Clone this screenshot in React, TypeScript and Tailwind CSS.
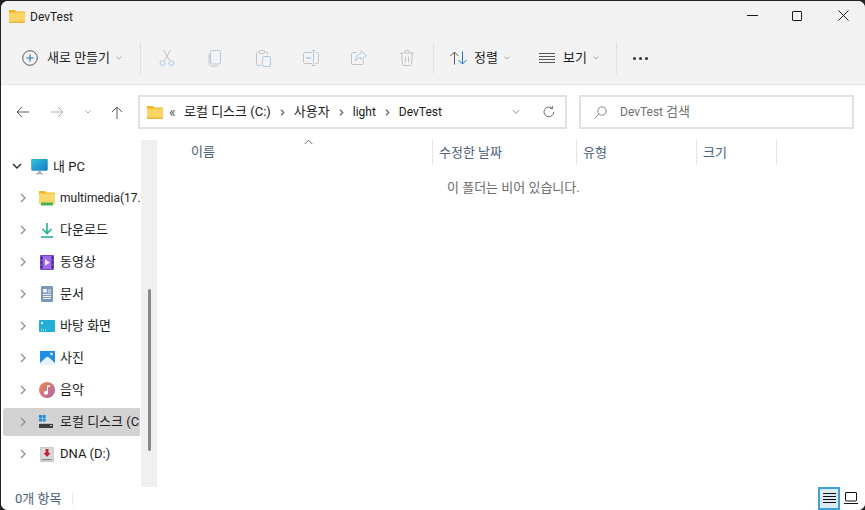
import React from "react";

const font = { fontFamily: 'Roboto, "Noto Sans CJK KR", sans-serif' };

function Chevron({ className = "" }: { className?: string }) {
  return (
    <svg width="8" height="6" viewBox="0 0 8 6" className={className} fill="none" stroke="#8a8a8a" strokeWidth="1">
      <path d="M0.8 1.2 L4 4.4 L7.2 1.2" />
    </svg>
  );
}

function FolderIcon({ size = 16 }: { size?: number }) {
  return (
    <svg width={size} height={Math.round(size * 0.82)} viewBox="0 0 16 13">
      <path d="M0 1.2C0 .5.5 0 1.2 0h4.3l1.8 1.6H16V4H0z" fill="#f5b21a" />
      <rect x="0" y="2.6" width="16" height="10.4" rx="0.8" fill="#fbd464" />
      <rect x="0" y="11.6" width="16" height="1.4" fill="#eeb53a" />
    </svg>
  );
}

function Cut() {
  return (
    <svg width="16" height="18" viewBox="0 0 16 18" fill="none">
      <path d="M4.5 1 L10.5 11.5 M11.5 1 L5.5 11.5" stroke="#c3c3c3" />
      <circle cx="3.5" cy="14" r="2.5" stroke="#a9cbe8" />
      <circle cx="12.5" cy="14" r="2.5" stroke="#a9cbe8" />
    </svg>
  );
}
function Copy() {
  return (
    <svg width="14" height="17" viewBox="0 0 14 17" fill="none">
      <path d="M1 3.5V13.5C1 15 2 16 3.5 16H9" stroke="#c3c3c3" />
      <rect x="2.5" y="0.5" width="10" height="13.5" rx="2" stroke="#a9cbe8" />
    </svg>
  );
}
function Paste() {
  return (
    <svg width="15" height="17" viewBox="0 0 15 17" fill="none">
      <path d="M5 15.5H2C1 15.5.5 15 .5 14V3.5C.5 2.5 1 2 2 2H10C11 2 11.5 2.5 11.5 3.5V5" stroke="#c3c3c3" />
      <rect x="3.5" y="0.5" width="5" height="3" rx="1" fill="#f3f3f3" stroke="#c3c3c3" />
      <rect x="6.5" y="6.5" width="8" height="10" rx="1.5" stroke="#a9cbe8" />
    </svg>
  );
}
function Rename() {
  return (
    <svg width="16" height="16" viewBox="0 0 16 16" fill="none">
      <path d="M9 2.5H2C1 2.5.5 3 .5 4V12C.5 13 1 13.5 2 13.5H9" stroke="#c3c3c3" />
      <path d="M12.5 2.5H14C15 2.5 15.5 3 15.5 4V12C15.5 13 15 13.5 14 13.5H12.5" stroke="#c3c3c3" />
      <path d="M8.5.5H12.5M10.5.5V15.5M8.5 15.5H12.5" stroke="#a9cbe8" />
      <path d="M3 8H8" stroke="#a9cbe8" strokeWidth="1.5" />
    </svg>
  );
}
function Share() {
  return (
    <svg width="16" height="16" viewBox="0 0 16 16" fill="none">
      <path d="M6 2.5H2C1 2.5.5 3 .5 4V13C.5 14 1 14.5 2 14.5H11C12 14.5 12.5 14 12.5 13V10" stroke="#c3c3c3" />
      <path d="M10 .8 L15.5 5.5 L10 10 V7.5 C7 7.5 5.5 9 4.5 11.5 C4.5 7 6.5 3.8 10 3.5 Z" stroke="#a9cbe8" />
    </svg>
  );
}
function Trash() {
  return (
    <svg width="14" height="16" viewBox="0 0 14 16" fill="none" stroke="#c3c3c3">
      <path d="M0 3H14M5 3V1.5C5 1 5.5.5 6 .5H8C8.5.5 9 1 9 1.5V3" />
      <path d="M1.5 3L2.5 14C2.6 15 3 15.5 4 15.5H10C11 15.5 11.4 15 11.5 14L12.5 3" />
      <path d="M5.5 6.5V12.5M8.5 6.5V12.5" />
    </svg>
  );
}
function SortIcon() {
  return (
    <svg width="17" height="14" viewBox="0 0 17 14" fill="none">
      <path d="M.5 5L4.5 1L8.5 5M4.5 1V13.5" stroke="#5a5a5a" />
      <path d="M8.5 9L12.5 13L16.5 9M12.5 13V.5" stroke="#1b78c9" />
    </svg>
  );
}

function ToolIcon({ children }: { children: React.ReactNode }) {
  return <div className="flex justify-center items-center w-[48px]">{children}</div>;
}

function Sep() {
  return <div className="w-px h-8 bg-[#e2e2e2]" />;
}

function Crumb() {
  return (
    <div className="w-[23px] flex justify-center shrink-0">
      <svg width="5" height="7" viewBox="0 0 5 7" fill="none" stroke="#666" strokeWidth="1.2">
        <path d="M1 .8L3.8 3.5L1 6.2" />
      </svg>
    </div>
  );
}

function Toolbar() {
  return (
    <div className="h-[52px] flex items-center pl-[21px] text-[13px] text-[#1b1b1b] bg-[#f3f3f3] border-b border-[#e3e3e3] box-content">
      <svg width="16" height="16" viewBox="0 0 16 16" fill="none">
        <circle cx="8" cy="8" r="7.3" stroke="#5c5c5c" />
        <path d="M8 4.2V11.8M4.2 8H11.8" stroke="#1b78c9" strokeWidth="1.1" />
      </svg>
      <span className="ml-[9px] w-[64px] whitespace-nowrap">새로 만들기</span>
      <Chevron className="ml-[4px] scale-75" />
      <div className="ml-[17px]"><Sep /></div>
      <div className="w-[2px]" />
      <ToolIcon><Cut /></ToolIcon>
      <ToolIcon><Copy /></ToolIcon>
      <ToolIcon><Paste /></ToolIcon>
      <ToolIcon><Rename /></ToolIcon>
      <ToolIcon><Share /></ToolIcon>
      <ToolIcon><Trash /></ToolIcon>
      <div className="ml-[2px]"><Sep /></div>
      <div className="ml-[16px]"><SortIcon /></div>
      <span className="ml-[7px] w-[24px] whitespace-nowrap">정렬</span>
      <Chevron className="ml-[5px] scale-75" />
      <svg className="ml-[28px]" width="16" height="11" viewBox="0 0 16 11" stroke="#555">
        <path d="M0 .5H16M0 3.5H16M0 6.5H16M0 9.5H16" />
      </svg>
      <span className="ml-[8px] w-[24px] whitespace-nowrap">보기</span>
      <Chevron className="ml-[5px] scale-75" />
      <div className="ml-[16px]"><Sep /></div>
      <div className="ml-[16px] flex gap-[3px]">
        <div className="w-[3px] h-[3px] rounded-full bg-[#333]" />
        <div className="w-[3px] h-[3px] rounded-full bg-[#333]" />
        <div className="w-[3px] h-[3px] rounded-full bg-[#333]" />
      </div>
    </div>
  );
}

function Address() {
  return (
    <div className="h-[50px] pt-[4px] flex items-center bg-white text-[12px]">
      <div className="w-[137px] pl-[15px] flex items-center shrink-0">
        <svg width="13" height="12" viewBox="0 0 13 12" fill="none" stroke="#5c5c5c" strokeWidth="1">
          <path d="M6 1L1 6L6 11M1 6H13" />
        </svg>
        <svg className="ml-[22px]" width="13" height="12" viewBox="0 0 13 12" fill="none" stroke="#b0b0b0" strokeWidth="1">
          <path d="M7 1L12 6L7 11M12 6H0" />
        </svg>
        <Chevron className="ml-[20px] scale-75" />
        <svg className="ml-[19px]" width="12" height="13" viewBox="0 0 12 13" fill="none" stroke="#5c5c5c" strokeWidth="1">
          <path d="M1 6L6 1L11 6M6 1V13" />
        </svg>
      </div>
      <div className="w-[429px] h-[34px] border-2 border-[#e1e1e1] flex items-center pl-[7px] shrink-0 text-[#1b1b1b]">
        <FolderIcon size={16} />
        <span className="ml-[6px] w-[15px] text-[#555] text-[14px] leading-none">«</span>
        <span className="whitespace-nowrap text-[13px]">로컬 디스크 (C:)</span>
        <Crumb />
        <span className="text-[13px]">사용자</span>
        <Crumb />
        <span>light</span>
        <Crumb />
        <span>DevTest</span>
        <div className="flex-1" />
        <Chevron className="mr-[23px]" />
        <svg className="mr-[10px]" width="12" height="12" viewBox="0 0 12 12" fill="none" stroke="#707070">
          <path d="M10.8 6A4.9 4.9 0 1 1 9 2.1" />
          <path d="M9.5 .2V2.6H7" />
        </svg>
      </div>
      <div className="ml-[12px] w-[275px] h-[34px] border-2 border-[#e1e1e1] flex items-center pl-[13px] shrink-0 text-[#707070]">
        <svg width="13" height="13" viewBox="0 0 13 13" fill="none" stroke="#8a8a8a">
          <circle cx="8" cy="5" r="4.2" />
          <path d="M5 8L.7 12.3" />
        </svg>
        <span className="ml-[13px]">DevTest <span className="text-[13px]">검색</span></span>
      </div>
    </div>
  );
}

function Row({ icon, label, selected = false, size = "text-[13px]" }: { icon: React.ReactNode; label: string; selected?: boolean; size?: string }) {
  return (
    <div className="h-8 flex items-center pl-[2px]">
      <div className={`h-7 w-[137px] flex items-center overflow-hidden rounded-l-[3px] ${selected ? "bg-[#d3d3d3]" : ""}`}>
        <svg className="ml-[17px] shrink-0" width="6" height="10" viewBox="0 0 6 10" fill="none" stroke="#8a8a8a" strokeWidth="1.2">
          <path d="M1 1L5 5L1 9" />
        </svg>
        <div className="w-[18px] ml-[12px] flex justify-center shrink-0">{icon}</div>
        <span className={`ml-[4px] whitespace-nowrap text-[#1b1b1b] ${size}`}>{label}</span>
      </div>
    </div>
  );
}

function Sidebar() {
  return (
    <div className="w-[140px] shrink-0 overflow-hidden">
      <div className="h-[16px]" />
      <div className="h-[31px] flex items-center pl-[11px]">
        <svg width="10" height="7" viewBox="0 0 10 7" fill="none" stroke="#2b2b2b" strokeWidth="1.4">
          <path d="M1 1L5 5L9 1" />
        </svg>
        <svg className="ml-[9px]" width="17" height="16" viewBox="0 0 17 16">
          <defs>
            <linearGradient id="pc" x1="0" y1="0" x2="1" y2="1">
              <stop offset="0" stopColor="#35c3e0" />
              <stop offset="1" stopColor="#0f7fc4" />
            </linearGradient>
          </defs>
          <rect x="0.5" y="0" width="16" height="11.5" rx="1" fill="url(#pc)" stroke="#2e8fb0" strokeWidth="0.5" />
          <rect x="7" y="11.5" width="3" height="2.5" fill="#a8b4be" />
          <rect x="5" y="14" width="7" height="1.3" fill="#a8b4be" />
        </svg>
        <span className="ml-[5px] text-[13px] text-[#1b1b1b]">내 PC</span>
      </div>
      <Row
        size="text-[12px]"
        label="multimedia(17.4"
        icon={
          <svg width="16" height="15" viewBox="0 0 16 15">
            <path d="M0 1C0 .4.4 0 1 0h4.5l1.8 1.5H16V4H0z" fill="#f5b21a" />
            <rect y="2.5" width="16" height="10.5" rx="0.5" fill="#fbd76d" />
            <rect x="2" y="11.5" width="12" height="3" rx="0.5" fill="#48b34a" />
          </svg>
        }
      />
      <Row
        label="다운로드"
        icon={
          <svg width="14" height="15" viewBox="0 0 14 15" fill="none">
            <path d="M7 0V10M2.5 6L7 10.5L11.5 6" stroke="#1fb58f" strokeWidth="1.6" />
            <path d="M1 14H13" stroke="#1ea6a0" strokeWidth="1.6" />
          </svg>
        }
      />
      <Row
        label="동영상"
        icon={
          <svg width="14" height="15" viewBox="0 0 14 15">
            <rect width="14" height="15" rx="1" fill="#7b44c8" />
            <rect x="3" y="1" width="8" height="13" fill="#9c6be6" />
            <path d="M5 4.2L10 7.5L5 10.8Z" fill="#efe6ff" />
            <path d="M1 2h1v2H1zM1 6.5h1v2H1zM1 11h1v2H1zM12 2h1v2h-1zM12 6.5h1v2h-1zM12 11h1v2h-1z" fill="#2a1a55" />
          </svg>
        }
      />
      <Row
        label="문서"
        icon={
          <svg width="12" height="16" viewBox="0 0 12 16">
            <rect width="12" height="16" rx="1" fill="#7d97b8" />
            <rect x="2" y="3" width="4" height="3.5" fill="#eef3f8" />
            <path d="M7 3.5h3v1H7zM7 5.5h3v1H7zM2 8h8v1H2zM2 10h8v1H2zM2 12h8v1H2z" fill="#eef3f8" />
          </svg>
        }
      />
      <Row
        label="바탕 화면"
        icon={
          <svg width="16" height="12" viewBox="0 0 16 12">
            <rect width="16" height="12" rx="1" fill="#23aed8" />
            <path d="M2 9.5h1v1H2zM4 9.5h1v1H4zM6 9.5h1v1H6zM2 2h2v2H2z" fill="#d9f3fb" />
          </svg>
        }
      />
      <Row
        label="사진"
        icon={
          <svg width="15" height="14" viewBox="0 0 15 14">
            <rect width="15" height="14" fill="#1f8fe3" />
            <path d="M0 12L6 6.5C7 5.5 8 5.5 9 6.5L15 12V14H0Z" fill="#e6f3fd" />
            <circle cx="11.5" cy="3" r="1.3" fill="#e6f3fd" />
          </svg>
        }
      />
      <Row
        label="음악"
        icon={
          <svg width="16" height="16" viewBox="0 0 16 16">
            <defs>
              <linearGradient id="mu" x1="0" y1="0" x2="1" y2="1">
                <stop offset="0" stopColor="#ee8d4c" />
                <stop offset="1" stopColor="#b05fae" />
              </linearGradient>
            </defs>
            <circle cx="8" cy="8" r="8" fill="url(#mu)" />
            <path d="M8 3.5H11V5H9V10.8A2 2 0 1 1 8 9.1Z" fill="#fff" />
          </svg>
        }
      />
      <Row
        selected
        label="로컬 디스크 (C:)"
        icon={
          <svg width="16" height="14" viewBox="0 0 16 14">
            <path d="M0 0h3v3H0zM3.6 0h3v3h-3zM0 3.6h3v3H0zM3.6 3.6h3v3h-3z" fill="#1c8fe0" />
            <rect x="0" y="7.5" width="14" height="1.2" fill="#f2f2f2" />
            <rect x="0" y="8.7" width="14" height="4.3" rx="0.5" fill="#3f3f3f" />
            <rect x="11" y="10" width="2" height="1" fill="#9fe08f" />
          </svg>
        }
      />
      <Row
        size="text-[13px]"
        label="DNA (D:)"
        icon={
          <svg width="14" height="15" viewBox="0 0 14 15">
            <rect width="14" height="15" rx="1" fill="#d9d9d9" stroke="#aaa" strokeWidth="0.5" />
            <path d="M5.5 2H8.5V6H10.5L7 10L3.5 6H5.5Z" fill="#c81e32" />
            <rect x="2" y="12" width="10" height="1.2" fill="#8b8b8b" />
          </svg>
        }
      />
    </div>
  );
}

function Col({ w, label }: { w: string; label: string }) {
  return (
    <div className={`${w} h-[25px] shrink-0 flex items-center pl-[6px] border-r border-[#e5e5e5] text-[13px] text-[#4c607a] whitespace-nowrap`}>
      {label}
    </div>
  );
}

function Content() {
  return (
    <div className="flex-1 relative pt-[5px]">
      <div className="flex items-center pl-[25px]">
        <Col w="w-[248px]" label="" />
        <Col w="w-[144px]" label="수정한 날짜" />
        <Col w="w-[120px]" label="유형" />
        <Col w="w-[80px]" label="크기" />
      </div>
      <div className="absolute left-[31px] top-[7px] text-[13px] text-[#4c607a] leading-[20px]">이름</div>
      <svg className="absolute left-[144px] top-[4px]" width="9" height="6" viewBox="0 0 9 6" fill="none" stroke="#707070">
        <path d="M.7 5L4.5 1.2L8.3 5" />
      </svg>
      <div className="mt-[13px] pl-[287px] text-[13px] text-[#6d6d6d] leading-[20px]">이 폴더는 비어 있습니다.</div>
    </div>
  );
}

export default function App() {
  return (
    <div className="w-[865px] h-[510px] overflow-hidden bg-[#222]" style={font}>
      <div className="w-[864px] ml-px mt-px h-[509px] bg-white rounded-[7px] overflow-hidden flex flex-col">
        <div className="h-[31px] bg-[#f3f3f3] flex items-center pl-[8px] shrink-0">
          <FolderIcon size={16} />
          <span className="ml-[5px] text-[12px] text-[#1b1b1b]">DevTest</span>
          <div className="flex-1" />
          <div className="flex items-center mb-[2px]">
            <svg width="11" height="1" className="mr-[34px]"><rect width="11" height="1" fill="#1b1b1b" /></svg>
            <div className="w-[10px] h-[10px] border border-[#1b1b1b] rounded-[1px] mr-[36px]" />
            <svg className="mr-[16px]" width="11" height="11" viewBox="0 0 11 11" stroke="#1b1b1b">
              <path d="M.5.5L10.5 10.5M10.5.5L.5 10.5" />
            </svg>
          </div>
        </div>
        <Toolbar />
        <Address />
        <div className="flex flex-1 min-h-0">
          <Sidebar />
          <div className="w-[16px] mt-[5px] bg-[#f0f0f0] shrink-0 flex flex-col">
            <div className="h-[149px]" />
            <div className="ml-[7px] w-[3px] h-[162px] bg-[#8a8a8a] rounded-full" />
          </div>
          <div className="w-[3px] shrink-0" />
          <Content />
        </div>
        <div className="h-[23px] shrink-0 flex items-center pl-[14px] text-[13px] text-[#4c607a] bg-white">
          <span className="w-[57px]">0개 항목</span>
          <div className="w-px h-[12px] bg-[#e8e8e8]" />
          <div className="flex-1" />
          <div className="w-[22px] h-[23px] border-2 border-[#3ba1e0] bg-[#dcebf6] flex items-center justify-center">
            <svg width="13" height="11" viewBox="0 0 13 11" stroke="#111"><path d="M0 .5H13M0 3.5H13M0 6.5H13M0 9.5H13" /></svg>
          </div>
          <svg className="ml-[4px] mr-[7px]" width="14" height="13" viewBox="0 0 14 13" fill="none" stroke="#111">
            <rect x="1.5" y=".5" width="11" height="8.5" rx="0.5" />
            <path d="M0 11.5H14" />
          </svg>
        </div>
      </div>
    </div>
  );
}
